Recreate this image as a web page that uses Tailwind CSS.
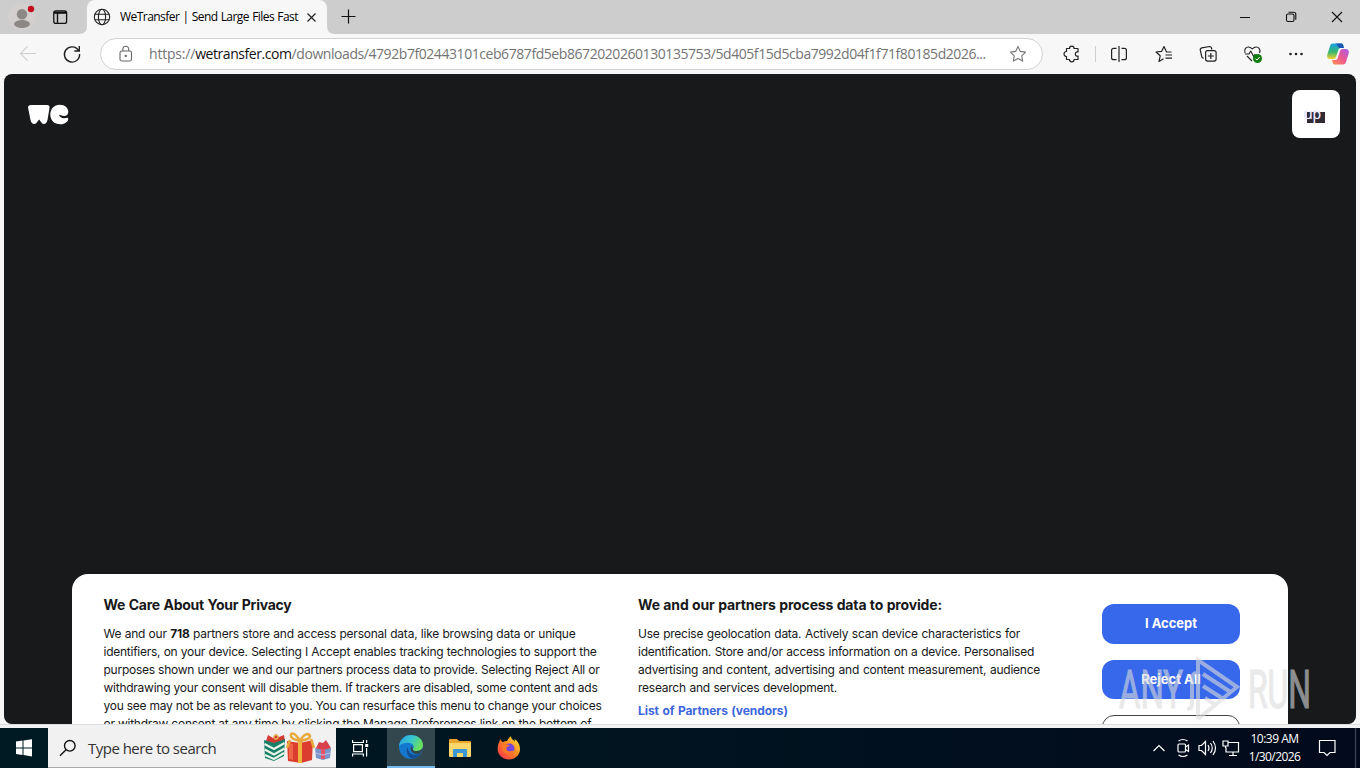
<!DOCTYPE html>
<html lang="en">
<head>
<meta charset="utf-8">
<title>WeTransfer | Send Large Files Fast</title>
<script src="https://cdn.jsdelivr.net/npm/@tailwindcss/browser@4"></script>
</head>
<body class="relative flex h-[768px] w-[1360px] flex-col overflow-hidden bg-[#f7f7f7] font-['Open_Sans','Noto_Sans',sans-serif] text-black">

<!-- Title bar -->
<header class="flex h-[34px] shrink-0 items-end bg-[#cdcdcd]">
  <svg class="h-[34px] w-[87px] shrink-0" viewBox="0 0 87 34">
    <circle cx="22" cy="17" r="14" fill="#d2cfce"/>
    <circle cx="22" cy="14.2" r="5.2" fill="#8b8886"/><ellipse cx="22" cy="24" rx="8" ry="4" fill="#8b8886"/>
    <circle cx="31" cy="9" r="3.2" fill="#c50f1f"/>
    <rect x="53.8" y="10.8" width="12.8" height="12.6" rx="2.2" fill="none" stroke="#111" stroke-width="1.3"/>
    <path d="M57.500 13v10" stroke="#111" stroke-width="1.400"/><path d="M54 11.500h12.500v2.300H54z" fill="#111"/>
    <path d="M79 34q8 0 8-8v8z" fill="#f7f7f7"/>
  </svg>
  <div class="flex h-[34px] w-[240px] items-center rounded-t-lg bg-[#f7f7f7] pl-[6px]">
    <svg class="size-[18px] shrink-0" viewBox="0 0 18 18" fill="none" stroke="#222" stroke-width="1.100"><circle cx="9" cy="9" r="7.700"/><ellipse cx="9" cy="9" rx="3.600" ry="7.700"/><path d="M1.800 6.300h14.400M1.800 11.700h14.400"/></svg>
    <span class="ml-[9px] w-[178px] shrink-0 whitespace-nowrap text-[12px] leading-4 tracking-[-0.54px] [text-align-last:justify]">WeTransfer | Send Large Files Fast</span>
    <svg class="ml-[8px] size-[11px] shrink-0" viewBox="0 0 11 11" stroke="#222" stroke-width="1.200"><path d="M1.500 1.500l8 8M9.500 1.500l-8 8"/></svg>
  </div>
  <svg class="h-[34px] w-[32px]" viewBox="0 0 32 34"><path d="M0 26q0 8 8 8H0z" fill="#f7f7f7"/><path d="M14.500 16.500h14M21.500 9.500v14" stroke="#111" stroke-width="1.200"/></svg>
  <svg class="ml-auto h-[34px] w-[128px]" viewBox="0 0 128 34" fill="none" stroke="#111" stroke-width="1.100"><path d="M8 17.500h10M100 12l10 10M110 12l-10 10"/><rect x="54.500" y="14" width="7.500" height="7.500" rx="1.500"/><path d="M56.500 12.200h5.300a2 2 0 0 1 2 2v5.500"/></svg>
</header>

<!-- Address bar row -->
<nav class="flex h-10 shrink-0 items-center">
  <svg class="h-10 w-[100px] shrink-0" viewBox="0 0 100 40" fill="none"><path d="M20.500 19.500H36M27.500 12.500l-7 7 7 7" stroke="#d0d0d0" stroke-width="1.100"/><path d="M78.500 16.500A7.600 7.600 0 1 0 79.600 20M79.300 12v5h-5" stroke="#222" stroke-width="1.400"/></svg>
  <div class="flex h-8 w-[943px] items-center rounded-full border border-[#d2d2d2] bg-white pl-[18px]">
    <svg class="h-[18px] w-[14px] shrink-0" viewBox="0 0 14 18" fill="none" stroke="#666" stroke-width="1.100"><rect x="1" y="6" width="11.500" height="10" rx="1.800"/><path d="M3.800 6V4.200a3 3 0 0 1 6 0V6"/><circle cx="6.800" cy="11" r=".6" fill="#666"/></svg>
    <span class="ml-[16px] w-[838px] shrink-0 whitespace-nowrap text-[14px] leading-5 tracking-[-0.435px] text-[#747474]"><span class="tracking-[-0.2px]">https://</span><span class="text-[#111]">wetransfer.com</span>/downloads/4792b7f02443101ceb6787fd5eb8672020260130135753/5d405f15d5cba7992d04f1f71f80185d2026...</span>
    <svg class="ml-[22px] size-[18px] shrink-0" viewBox="0 0 18 18" fill="none" stroke="#777" stroke-width="1.100" stroke-linejoin="round"><path d="M9 1.500l2.300 4.900 5.300.7-3.900 3.700 1 5.300L9 13.500l-4.700 2.600 1-5.300L1.400 7.100l5.300-.7z"/></svg>
  </div>
  <div class="flex items-center">
    <svg class="ml-[19px] size-5" viewBox="0 0 20 20" fill="none" stroke="#222" stroke-width="1.200" stroke-linejoin="round"><path d="M4.500 4.500H7.500A2.300 2.300 0 0 1 12.100 4.500H16V8C14.500 7.500 13.300 8.700 13.300 10S14.500 12.500 16 12V15.500H12.100A2.300 2.300 0 0 1 7.500 15.500H4.500V12.500A2.400 2.400 0 0 1 4.500 7.500z"/></svg>
    <div class="ml-[13px] h-4 w-px bg-[#cfcfcf]"></div>
    <svg class="ml-[13px] size-5" viewBox="0 0 20 20" fill="none" stroke="#222" stroke-width="1.200"><path d="M7.500 4.300H4.600a2 2 0 0 0-2 2v7.400a2 2 0 0 0 2 2h2.900M12.500 4.300h2.900a2 2 0 0 1 2 2v7.400a2 2 0 0 1-2 2h-2.900M10 2v16"/></svg>
    <svg class="ml-[25px] size-5" viewBox="0 0 20 20" fill="none" stroke="#222" stroke-width="1.200" stroke-linejoin="round"><path d="M17.500 8h-5L10 2.500 7.700 7.300 2 8l4.200 3.800L5 17.500l4.500-2.700M11.500 11h6.500M11.500 14.200h6.500"/></svg>
    <svg class="ml-[24px] size-5" viewBox="0 0 20 20" fill="none" stroke="#222" stroke-width="1.200"><rect x="7.600" y="6.600" width="10.500" height="10.500" rx="2"/><path d="M12.800 9v6M9.800 12h6M5.500 14.500L3.800 13 2.300 6.200a2 2 0 0 1 1.500-2.300l7.700-1.400a2 2 0 0 1 2 1.500l.4 1.500"/></svg>
    <svg class="ml-[25px] size-5" viewBox="0 0 20 20" fill="none" stroke="#222" stroke-width="1.100" stroke-linejoin="round"><path d="M2 9C.8 4.800 3.300 3 5.300 3 7.500 3 9.300 5 9.300 5S11 3 13.200 3c2.300 0 4.800 2.300 3.300 6M2 10h4l1.700-3 3 5.500L12.300 10M4 12l5 5"/><circle cx="14.500" cy="14.500" r="4.500" fill="#107c10" stroke="none"/><path d="M12.400 14.600l1.500 1.500 2.800-3" stroke="#fff" stroke-width="1"/></svg>
    <svg class="ml-[23px] size-5" viewBox="0 0 20 20" fill="#222"><circle cx="4.500" cy="10" r="1.300"/><circle cx="10" cy="10" r="1.300"/><circle cx="15.500" cy="10" r="1.300"/></svg>
    <svg class="ml-[21px] size-[22px]" viewBox="0 0 22 22"><defs><linearGradient id="ca" x1="0" y1="0" x2="0" y2="1"><stop stop-color="#17a1e8"/><stop offset=".55" stop-color="#39b76f"/><stop offset="1" stop-color="#f5cf2d"/></linearGradient><linearGradient id="cb" x1="1" y1="0" x2="0" y2="1"><stop stop-color="#a45fe8"/><stop offset=".5" stop-color="#ee5791"/><stop offset="1" stop-color="#fb9450"/></linearGradient></defs><path d="M6 .5h8c2 0 2 1 3 4.500h-3c-2 0-2.500 1-3 3l-2 6c-.5 1-1 2-2.500 2H3c-3 0-3.200-3-2.500-5L3 3C3.500 1.300 4.600.5 6 .5z" fill="url(#ca)"/><path d="M9 .5h5c2 0 2 1 3 4.500h-5z" fill="#1855b5"/><path d="M16 21.500H8c-2 0-2-1-3-4.500h3c2 0 2.500-1 3-3l2-6c.5-1 1-2 2.500-2H19c3 0 3.200 3 2.500 5L19 19c-.5 1.700-1.600 2.500-3 2.500z" fill="url(#cb)"/></svg>
  </div>
</nav>

<!-- Page -->
<main class="mx-1 flex h-[650px] shrink-0 flex-col overflow-hidden rounded-lg bg-[#17191b]">
  <div class="flex h-[500px] shrink-0 items-start justify-between pt-4 pr-4 pl-[23px]">
    <svg class="mt-[13px] h-[24px] w-[44px]" viewBox="0 0 44 24" fill="#fff"><path d="M1 4.500Q1 2 4 2H20Q23 2 22.500 5L20.500 17Q19.500 21 16.800 21 15 21 13.700 18.500L12.200 16.500 10.500 18.500Q9 21 7.200 21 4.500 21 3.500 17Z"/><path d="M32.800 1.700C38 1.700 41.300 5 41.300 8.700 41.300 11.500 39.500 13 37 13 35 13 33.500 12 32 11.800 32.500 14 35 15.500 37.500 15.200 39.500 15 41.200 14 41.200 16 41.200 18.500 38 21.300 33.500 21.300 27 21.300 23.300 17 23.300 11.500S27 1.700 32.800 1.700Z"/></svg>
    <div class="flex size-12 items-center justify-center rounded-lg bg-white pt-[7px]">
      <div class="h-[11px] w-[18px] bg-[#302c31] text-[14px] leading-[4px] text-white"><span class="-ml-[3px] [text-shadow:0_0_1px_#7c6bd0]">up</span></div>
    </div>
  </div>
  <section class="mx-[68px] flex h-[150px] shrink-0 overflow-hidden rounded-t-2xl bg-white pl-[31.500px] font-['Inter',sans-serif] text-[12px] leading-[18px] text-[#17181a]">
    <div class="w-[534.500px] shrink-0 pt-[22px]">
      <h2 class="w-[188px] text-[14px] leading-[18px] font-bold whitespace-nowrap tracking-[-0.25px] [text-align-last:justify]">We Care About Your Privacy</h2>
      <div class="mt-[11px] whitespace-nowrap tracking-[-0.25px] [text-align-last:justify]">
        <p class="w-[472px] tracking-[-0.22px]">We and our <b>718</b> partners store and access personal data, like browsing data or unique</p>
        <p class="w-[493px]">identifiers, on your device. Selecting I Accept enables tracking technologies to support the</p>
        <p class="w-[496px]">purposes shown under we and our partners process data to provide. Selecting Reject All or</p>
        <p class="w-[494px]">withdrawing your consent will disable them. If trackers are disabled, some content and ads</p>
        <p class="w-[498px]">you see may not be as relevant to you. You can resurface this menu to change your choices</p>
        <p class="w-[488px]">or withdraw consent at any time by clicking the Manage Preferences link on the bottom of</p>
      </div>
    </div>
    <div class="w-[464px] shrink-0 pt-[22px]">
      <h2 class="w-[304px] text-[14px] leading-[18px] font-bold whitespace-nowrap tracking-[-0.15px] [text-align-last:justify]">We and our partners process data to provide:</h2>
      <div class="mt-[11px] whitespace-nowrap tracking-[-0.25px] [text-align-last:justify]">
        <p class="w-[382px]">Use precise geolocation data. Actively scan device characteristics for</p>
        <p class="w-[396px]">identification. Store and/or access information on a device. Personalised</p>
        <p class="w-[402px]">advertising and content, advertising and content measurement, audience</p>
        <p class="w-[199px]">research and services development.</p>
        <p class="mt-[5px] w-[150px] font-bold tracking-[-0.05px] text-[#3c66dc]">List of Partners (vendors)</p>
      </div>
    </div>
    <div class="flex w-[138px] shrink-0 flex-col gap-4 pt-[30px] text-[13px] font-bold text-white">
      <button class="h-10 shrink-0 rounded-xl bg-[#3767ea] pb-[2px]">I Accept</button>
      <button class="h-[39px] shrink-0 rounded-xl bg-[#3767ea] pb-px">Reject All</button>
      <button class="h-10 shrink-0 rounded-xl border border-[#444] bg-white"></button>
    </div>
  </section>
</main>
<div class="h-1 shrink-0 border-t border-[#dcdcdc] bg-[#f1f3f5]"></div>

<!-- Taskbar -->
<footer class="flex h-10 shrink-0 items-center bg-linear-to-r from-[#001a23] via-[#001520] via-40% to-[#020a1c]">
  <svg class="h-10 w-12 shrink-0" viewBox="0 0 48 40" fill="#fff"><path d="M16 13.500l6.500-1v7H16zM23.500 12.400L32 11.300v8.200h-8.500zM16 20.500h6.500V27L16 26zM23.500 20.500H32v7.900l-8.500-1.300z"/></svg>
  <div class="flex h-10 w-[288px] shrink-0 items-center border-b border-[#aaa] bg-[#f1f1f1] pl-[11px]">
    <svg class="size-[18px] shrink-0" viewBox="0 0 18 18" fill="none" stroke="#111" stroke-width="1.400"><circle cx="10.800" cy="6.800" r="5.300"/><path d="M7 10.700L1 16.700"/></svg>
    <span class="ml-[11px] w-[128px] shrink-0 whitespace-nowrap text-[15px] leading-5 tracking-[-0.52px] text-[#333] [text-align-last:justify]">Type here to search</span>
    <svg class="ml-[47px] h-[34px] w-[70px] shrink-0" viewBox="0 0 70 34">
      <path d="M3 10l2-6 5 3 3-4 3 3 5-2 1 6-5 3H5z" fill="#d33a31"/><circle cx="13" cy="6" r="2" fill="none" stroke="#e8b34c" stroke-width="1.300"/><path d="M1 9l10 3 11-4-1 17-10 5L2 27z" fill="#177f68"/><path d="M1.500 13l9.500 5 10.500-6M1.700 18.500l9.300 5 10.500-6M2 24l9 4 10-6" fill="none" stroke="#e9f3e8" stroke-width="2.200"/>
      <path d="M24 10l13 2 13-3-1 20-11 3-13-2z" fill="#db3d2e"/><path d="M26 12l4 1v16l-4-1z" fill="#ef6548"/><path d="M35 11h4v21h-4z" fill="#f1b43c"/><path d="M37 10C32 1 27 1 28 5c0 3 5 4 9 5 4-8 9-8 10-5 0 3-5 4-10 5M27 9l-3 8M48 8l3 9" fill="none" stroke="#e9a93a" stroke-width="2.500"/>
      <path d="M53 17l3-6 4 1 3-3 5 8-4 2H54z" fill="#d9424b"/><path d="M52 17l8 2 8-2-1 10-7 2-7-2z" fill="#7995cb"/><path d="M58 18h4v10h-4z" fill="#e45666"/><path d="M52.500 22l7.500 2 7-2" fill="none" stroke="#c4bce8"/>
    </svg>
  </div>
  <svg class="h-10 w-[51px] shrink-0" viewBox="0 0 51 40" fill="none" stroke="#fff" stroke-width="1.200"><path d="M16.600 12v2.500H27.400V12M16.600 28.500V26H27.400V28.500M17.600 16.600H26.400V23.600H17.600zM30.600 12v3M30.600 20v8.500"/><path d="M29.200 16h3v3h-3z" fill="#fff" stroke="none"/></svg>
  <div class="flex h-10 w-12 shrink-0 items-center justify-center border-b-2 border-[#76b9ed] bg-[#33474f]">
    <svg class="size-6" viewBox="0 0 24 24"><defs><linearGradient id="ea" x1="0" y1="0" x2="1" y2=".4"><stop stop-color="#269fe2"/><stop offset=".55" stop-color="#36c5cd"/><stop offset="1" stop-color="#6cdf5c"/></linearGradient></defs><circle cx="12" cy="12" r="12" fill="#1578cf"/><path d="M0 11.500C.5 4.500 6 0 12 0c7 0 12 4.700 12 10 0 4-3 6-6.500 6-2.800 0-4-1-3.700-1.800 2-2.200.7-6.400-4.800-6.400C5 7.800 1.500 9 0 11.500z" fill="url(#ea)"/><path d="M9 12c-1 7 7 10 13 6-2 3-5 5.500-9 5.900C7.500 21 6.500 15 9 12z" fill="#124d91"/><path d="M13.800 14.200c-.3.800.9 1.800 3.700 1.800 2.500 0 4.800-1 6.500-3.300 0 2-1 4-2.200 5.600-4 2-10.100 0-10.100-4.600 0-1 .4-1.900 1-2.400.8.700 1.300 1.500 1.100 2.900z" fill="#33474f"/></svg>
  </div>
  <svg class="ml-[13px] h-6 w-6" viewBox="0 0 24 24"><path d="M1 4q0-1 1-1h7l2 2h11q1 0 1 1v14H1z" fill="#e8a62d"/><path d="M1 7h22v13q0 1-1 1H2q-1 0-1-1z" fill="#fbd66b"/><path d="M5 21v-7q0-1 1-1h12q1 0 1 1v7h-4v-4H9v4z" fill="#3d97d4"/></svg>
  <svg class="ml-[25px] size-6" viewBox="0 0 24 24"><defs><linearGradient id="fa" x1="1" y1="0" x2="0" y2="1"><stop stop-color="#ffef3d"/><stop offset=".45" stop-color="#ff8a20"/><stop offset="1" stop-color="#f72655"/></linearGradient></defs><path d="M3.500 3C4 5 5 6 6.500 6c1-.7 2-1 3.500-1C11 3 12.500 1 14 .3c0 2.500 2 3.700 4 5.200-.1-1-.5-2-.7-2.500C21 5 23 9 23 13c0 6-5 10.500-11 10.500S.6 19 .6 13C.6 9 2 6.500 3.500 3z" fill="url(#fa)"/><circle cx="12.500" cy="12.500" r="5" fill="#7646dc"/><path d="M5 9c3-2 5 0 7 0 1 0 1 1-2 2-1 .5-1 3 1 4 3 1 4-1 6 0-2 4-9 4-11 0-1-2-1-4-1-6z" fill="#ff7a27"/></svg>

  <svg class="ml-auto h-10 w-[96px] shrink-0" viewBox="0 0 96 40" fill="none" stroke="#fff" stroke-width="1.200">
    <path d="M9.500 23l5.500-5.500 5.500 5.500"/>
    <rect x="34" y="16" width="7.500" height="8" rx="1"/><path d="M41.500 19l3-2v6.500l-3-2M34.500 13q4.500-3 9 0M34.500 27q4.500 3 9 0"/>
    <path d="M55 17.500h2.500l4-4v13l-4-4h-2.500zM64 17q2 3 0 6M66.500 15q3.500 5 0 10M69 13q5 7 0 14"/>
    <path d="M84.500 14.500h10v9.500h-12.500v-4.500M85 27.500h8M89 24v3.500M79 13h5v5h-5zM81.500 18v2"/>
  </svg>
  <div class="ml-[8px] w-[54px] shrink-0 pr-px text-center text-[12px] leading-[18px] whitespace-nowrap text-white">
    <div class="tracking-[-0.52px]">10:39 AM</div>
    <div class="tracking-[-0.6px]">1/30/2026</div>
  </div>
  <svg class="h-10 w-[58px] shrink-0" viewBox="0 0 58 40" fill="none" stroke="#fff" stroke-width="1.200"><path d="M17.500 12.500h15.500v12H28l-3 3-3-3h-4.500z"/><path d="M53.500 0v40" stroke="#3c4658"/></svg>
</footer>

<!-- Watermark -->
<svg class="absolute top-[655px] left-[1114px] h-[70px] w-[202px] font-['Roboto',sans-serif] opacity-60" viewBox="0 0 202 70" fill="#dcdcdc" stroke="#dcdcdc">
  <text x="5" y="53" font-size="53" stroke-width="1.200" textLength="64" lengthAdjust="spacingAndGlyphs">ANY</text>
  <text x="134" y="53" font-size="53" stroke-width="1.200" textLength="63" lengthAdjust="spacingAndGlyphs">RUN</text>
  <path d="M84 18q-6-1-6 7v24q0 5-5 5M84 64V5L123 32 84 64M89 19l29 19M89 31l22 14M91 43l12 8" fill="none" stroke-width="4"/>
</svg>
</body>
</html>
